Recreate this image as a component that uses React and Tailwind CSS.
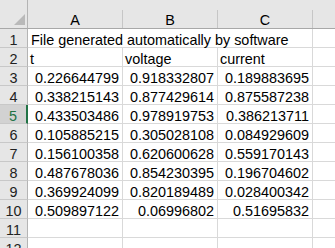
import React from "react";

const rows = [
  ["0.226644799", "0.918332807", "0.189883695"],
  ["0.338215143", "0.877429614", "0.875587238"],
  ["0.433503486", "0.978919753", "0.386213711"],
  ["0.105885215", "0.305028108", "0.084929609"],
  ["0.156100358", "0.620600628", "0.559170143"],
  ["0.487678036", "0.854230395", "0.196704602"],
  ["0.369924099", "0.820189489", "0.028400342"],
  ["0.509897122", "0.06996802", "0.51695832"],
];

const widths = ["w-[95px]", "w-[95px]", "w-[95px]"];

function RowHead({ n, selected }) {
  return (
    <div
      className={
        "w-[28px] shrink-0 flex items-end justify-center leading-[14px] border-b border-[#c8c8c8] " +
        (selected
          ? "bg-[#d2d2d2] text-[#217346] border-r-2 border-r-[#217346]"
          : "bg-[#e6e6e6] text-[#222] border-r border-r-[#b4b4b4]")
      }
    >
      {n}
    </div>
  );
}

function HeadCell({ label, w }) {
  return (
    <div className={w + " shrink-0 flex items-end border-b border-[#a8a8a8] bg-[#e6e6e6]"}>
      <div className="flex-1 text-center leading-[14px] pb-[1px]">{label}</div>
      <div className="w-px h-[18px] bg-[#c6c6c6]" />
    </div>
  );
}

export default function App() {
  return (
    <div
      className="w-[335px] h-[248px] overflow-hidden bg-white text-black text-[14.4px]"
      style={{ fontFamily: '"Liberation Sans", Arial, sans-serif' }}
    >
      {/* header */}
      <div className="flex h-[29px]">
        <div className="w-[28px] shrink-0 bg-[#e6e6e6] border-b border-[#a8a8a8] border-r border-r-[#b4b4b4] flex items-end justify-end pr-[2px] pb-[3px]">
          <svg width="11" height="11" viewBox="0 0 11 11">
            <polygon points="11,0 11,11 0,11" fill="#b9b9b9" />
          </svg>
        </div>
        <HeadCell label="A" w="w-[95px]" />
        <HeadCell label="B" w="w-[95px]" />
        <HeadCell label="C" w="w-[95px]" />
        <div className="flex-1 bg-[#e6e6e6] border-b border-[#a8a8a8]" />
      </div>

      {/* row 1 */}
      <div className="flex h-[19px]">
        <RowHead n={1} />
        <div className="w-[285px] shrink-0 flex items-end leading-[14px] pl-[3px] border-b border-r border-[#d9d9d9] whitespace-nowrap">
          File generated automatically by software
        </div>
        <div className="flex-1 border-b border-[#d9d9d9]" />
      </div>

      {/* row 2 */}
      <div className="flex h-[19px]">
        <RowHead n={2} />
        {["t", "voltage", "current"].map((t, i) => (
          <div
            key={i}
            className={widths[i] + " shrink-0 flex items-end leading-[14px] pl-[2px] border-b border-r border-[#d9d9d9]"}
          >
            {t}
          </div>
        ))}
        <div className="flex-1 border-b border-[#d9d9d9]" />
      </div>

      {rows.map((r, ri) => (
        <div key={ri} className="flex h-[19px]">
          <RowHead n={ri + 3} selected={ri + 3 === 5} />
          {r.map((v, i) => (
            <div
              key={i}
              className={widths[i] + " shrink-0 flex items-end justify-end leading-[14px] pr-[3px] border-b border-r border-[#d9d9d9]"}
            >
              {v}
            </div>
          ))}
          <div className="flex-1 border-b border-[#d9d9d9]" />
        </div>
      ))}

      {[11, 12].map((n) => (
        <div key={n} className="flex h-[19px]">
          <RowHead n={n} />
          {widths.map((w, i) => (
            <div key={i} className={w + " shrink-0 border-b border-r border-[#d9d9d9]"} />
          ))}
          <div className="flex-1 border-b border-[#d9d9d9]" />
        </div>
      ))}
    </div>
  );
}
